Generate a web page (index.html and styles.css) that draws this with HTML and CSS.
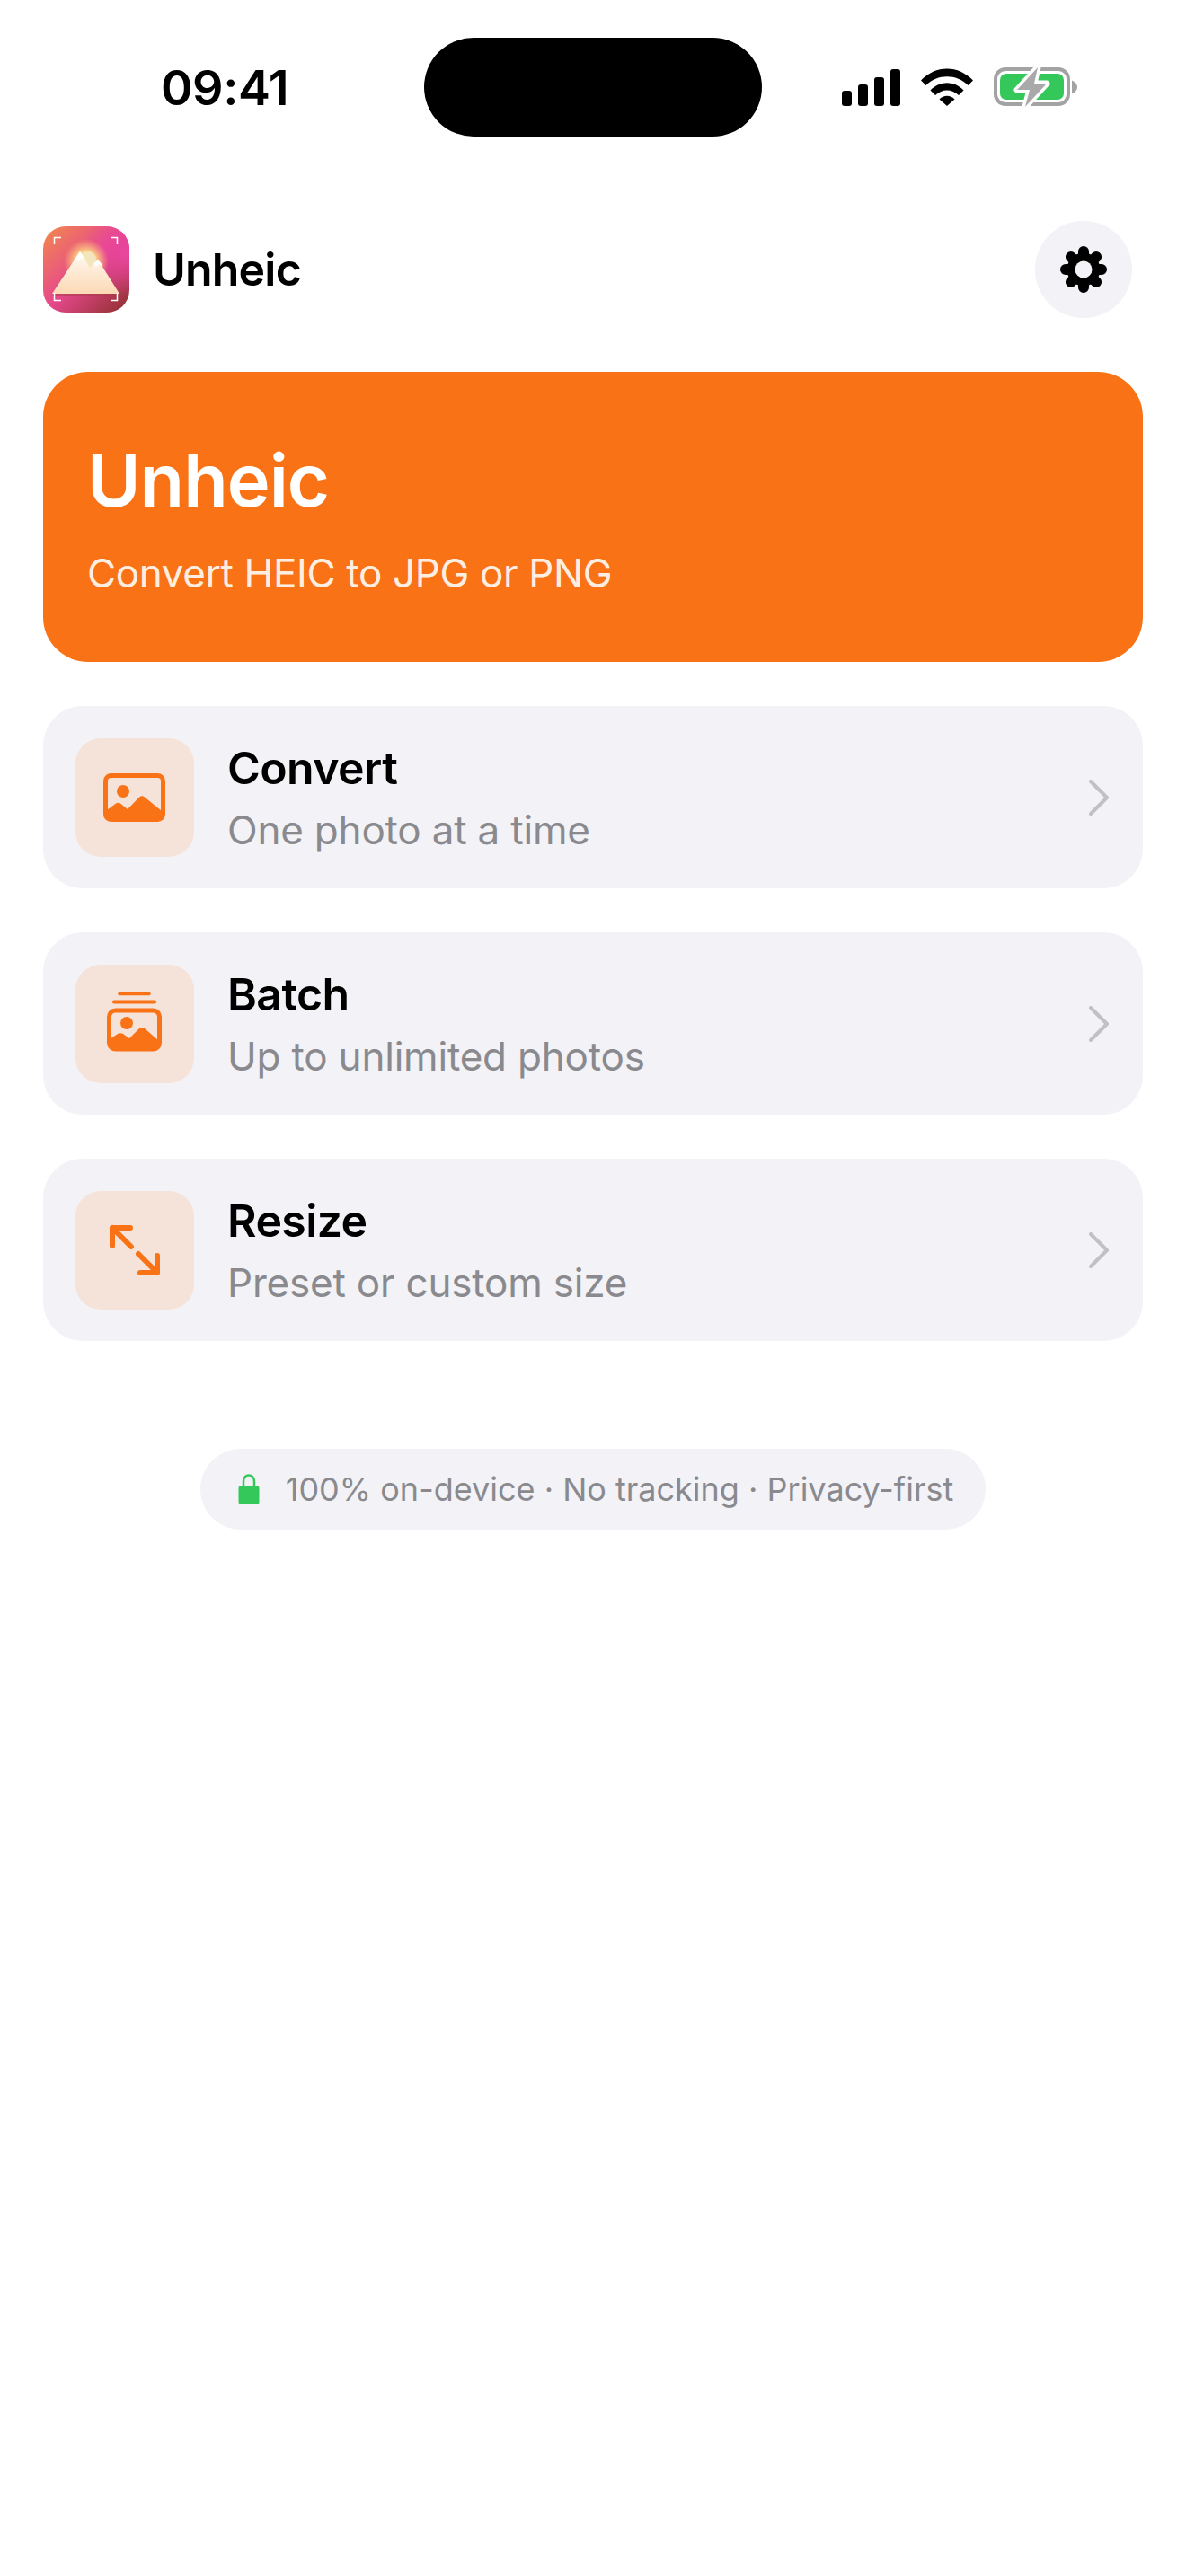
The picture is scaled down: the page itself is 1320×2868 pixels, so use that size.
FILE: index.html
```html
<!DOCTYPE html>
<html>
<head>
  <meta charset="UTF-8">
  <title>Unheic</title>
  <link rel="stylesheet" href="styles.css">
</head>
<body>
  <div class="status-bar">
    <div class="status-time">09:41</div>
    <div class="island"></div>
    <div class="status-icons">
      <svg class="signal" width="65" height="41" viewBox="0 0 65 41">
        <rect x="0" y="24" width="11" height="17" rx="3"/>
        <rect x="18" y="17" width="11" height="24" rx="3"/>
        <rect x="36" y="9" width="11" height="32" rx="3"/>
        <rect x="54" y="0" width="11" height="41" rx="3"/>
      </svg>
      <svg class="wifi" width="58" height="42" viewBox="0 0 58 42">
        <path d="M0 13.5C16-4 42-4 58 13.500L52.500 19C39.500 6 18.500 6 5.500 19Z"/>
        <path d="M10.500 24.500C21 13.500 37 13.500 47.500 24.500L42 30C34.500 22.500 23.500 22.500 16 30Z"/>
        <path d="M20.500 34.500C25.500 29.500 32.500 29.500 37.500 34.500L29 42Z"/>
      </svg>
      <svg class="battery" width="94" height="46" viewBox="0 0 94 46">
        <rect x="2" y="3" width="81" height="39" rx="11" fill="#fff" stroke="#a3a3a3" stroke-width="4"/>
        <rect x="7" y="8" width="71" height="29" rx="7" fill="#34c759"/>
        <path d="M87 15.500C91 17 93 20 93 23C93 26 91 29 87 30.500Z" fill="#a3a3a3"/>
        <path d="M49 1L26 26H40L35 45L59 19H45Z" fill="#a9a9a9" stroke="#fff" stroke-width="7" stroke-linejoin="round" paint-order="stroke"/>
      </svg>
    </div>
  </div>

  <div class="app-header">
    <div class="brand">
      <svg class="brand-logo" width="96" height="96" viewBox="0 0 96 96">
        <defs>
          <linearGradient id="logoBase" x1="0" y1="0" x2="1" y2="1">
            <stop offset="0" stop-color="#f28a4c"/>
            <stop offset="0.5" stop-color="#e6488c"/>
            <stop offset="1" stop-color="#8c2f2c"/>
          </linearGradient>
          <radialGradient id="logoPink" cx="0.95" cy="0.3" r="0.5">
            <stop offset="0" stop-color="#ea459f"/>
            <stop offset="1" stop-color="#ea459f" stop-opacity="0"/>
          </radialGradient>
          <radialGradient id="logoSun">
            <stop offset="0.4" stop-color="#ffdf8a"/>
            <stop offset="1" stop-color="#ffc070" stop-opacity="0"/>
          </radialGradient>
          <linearGradient id="logoPeak" x1="0" y1="0" x2="0" y2="1">
            <stop offset="0" stop-color="#fffaf2"/>
            <stop offset="1" stop-color="#fdd9b5"/>
          </linearGradient>
        </defs>
        <rect width="96" height="96" rx="25" fill="url(#logoBase)"/>
        <rect width="96" height="96" rx="25" fill="url(#logoPink)"/>
        <circle cx="48" cy="39" r="25" fill="url(#logoSun)"/>
        <circle cx="50" cy="37" r="9" fill="#f3e6bd"/>
        <path d="M10 75L41 28L52 46L61 37L85 75Z" fill="url(#logoPeak)"/>
        <path d="M35 37L41 28L47 37L42 35L39 39Z M56 42L61 37L67 44L62 42L59 45Z" fill="#fff"/>
        <path d="M10 75H85L83 78H12Z" fill="#a33b45" opacity="0.5"/>
        <path d="M12.500 20V12.500H20 M75 12.500H82.500V20 M12.500 74V82.500H20 M75 82.500H82.500V74" fill="none" stroke="#fff" stroke-width="1.500"/>
      </svg>
      <span class="brand-name">Unheic</span>
    </div>
    <button class="settings-btn">
      <svg width="54" height="54" viewBox="0 0 54 54">
        <g stroke="#000" stroke-width="12" stroke-linecap="round">
          <path d="M27 7V47M7 27H47M12.900 12.900L41.100 41.100M41.100 12.900L12.900 41.100"/>
        </g>
        <circle cx="27" cy="27" r="18.500"/>
        <circle cx="27" cy="27" r="9.500" fill="#f2f2f7"/>
      </svg>
    </button>
  </div>

  <div class="hero">
    <h1>Unheic</h1>
    <p>Convert HEIC to JPG or PNG</p>
  </div>

  <div class="tool-list">
    <div class="tool-row">
      <div class="tool-icon">
        <svg width="132" height="132" viewBox="0 0 132 132">
          <rect x="33.500" y="41.500" width="64" height="49" rx="6" fill="none" stroke="#f97316" stroke-width="5"/>
          <circle cx="53" cy="59" r="7" fill="#f97316"/>
          <path d="M35 80L45 72.500Q47.500 71 50 72.500L58 79L71 65.500Q74 63 77 65.500L96 81V87Q96 92 91 92H40Q35 92 35 87Z" fill="#f97316"/>
        </svg>
      </div>
      <div class="tool-text">
        <div class="tool-title">Convert</div>
        <div class="tool-sub">One photo at a time</div>
      </div>
      <svg class="chevron" width="24" height="40" viewBox="0 0 24 40"><path d="M2 2L20 20L2 38"/></svg>
    </div>

    <div class="tool-row">
      <div class="tool-icon">
        <svg width="132" height="132" viewBox="0 0 132 132">
          <path d="M49 32.500H82" stroke="#f97316" stroke-width="3.500" stroke-linecap="round"/>
          <path d="M43 41.500H88" stroke="#f97316" stroke-width="4" stroke-linecap="round"/>
          <rect x="37.500" y="51" width="56" height="43" rx="7" fill="none" stroke="#f97316" stroke-width="5"/>
          <circle cx="57" cy="65" r="7" fill="#f97316"/>
          <path d="M38 83L47 77Q50 75.500 53 77L60 82L71 71Q74 69 77 71L93 85V89Q93 95 87 95H44Q38 95 38 89Z" fill="#f97316"/>
        </svg>
      </div>
      <div class="tool-text">
        <div class="tool-title">Batch</div>
        <div class="tool-sub">Up to unlimited photos</div>
      </div>
      <svg class="chevron" width="24" height="40" viewBox="0 0 24 40"><path d="M2 2L20 20L2 38"/></svg>
    </div>

    <div class="tool-row">
      <div class="tool-icon">
        <svg width="132" height="132" viewBox="0 0 132 132">
          <path d="M62 62L41 41M41 61V41H61M70 70L91 91M91 72V91H72" fill="none" stroke="#f97316" stroke-width="6" stroke-linecap="round" stroke-linejoin="round"/>
        </svg>
      </div>
      <div class="tool-text">
        <div class="tool-title">Resize</div>
        <div class="tool-sub">Preset or custom size</div>
      </div>
      <svg class="chevron" width="24" height="40" viewBox="0 0 24 40"><path d="M2 2L20 20L2 38"/></svg>
    </div>
  </div>

  <div class="privacy-wrap">
    <div class="privacy-pill">
      <svg width="24" height="36" viewBox="0 0 24 36">
        <path d="M6 16V9.500C6 0 18 0 18 9.500V16" fill="none" stroke="#34c759" stroke-width="2.500"/>
        <rect x="0.500" y="14" width="23" height="21" rx="3" fill="#34c759"/>
      </svg>
      <span>100% on-device · No tracking · Privacy-first</span>
    </div>
  </div>
</body>
</html>
```

FILE: styles.css
```css
:root {
  --orange: #f97316;
  --row-bg: #f2f2f7;
  --icon-bg: #f5e3da;
  --grey-text: #8a8a8e;
}

* {
  box-sizing: border-box;
}

body {
  margin: 0;
  width: 1320px;
  height: 2868px;
  background-color: #fff;
  color: #000;
  font-family: Inter, "Liberation Sans", sans-serif;
  overflow: hidden;
}

/* 状态栏 */
.status-bar {
  display: grid;
  grid-template-columns: 472px 376px 1fr;
  align-items: center;
  height: 110px;
  margin-top: 42px;
}

.status-time {
  padding-left: 179px;
  font-size: 54px;
  font-weight: 600;
  letter-spacing: -0.5px;
}

.island {
  height: 110px;
  border-radius: 55px;
  background-color: #000;
}

.status-icons {
  display: flex;
  align-items: center;
  gap: 23px;
  padding-left: 89px;
}

/* 顶部 */
.app-header {
  display: flex;
  align-items: center;
  justify-content: space-between;
  height: 108px;
  margin-top: 94px;
  padding: 0 60px 0 48px;
}

.brand {
  display: flex;
  align-items: center;
  gap: 26px;
}

.brand-name {
  font-size: 50px;
  font-weight: 600;
  letter-spacing: -0.8px;
}

.settings-btn {
  display: flex;
  align-items: center;
  justify-content: center;
  width: 108px;
  height: 108px;
  padding: 0;
  border: none;
  border-radius: 50%;
  background-color: var(--row-bg);
}

.hero {
  height: 323px;
  margin: 60px 48px 0;
  padding: 71px 49px 0;
  border-radius: 50px;
  background-color: var(--orange);
  color: #fff;
}

.hero h1 {
  margin: 0;
  font-size: 81px;
  line-height: 100px;
  font-weight: 600;
  letter-spacing: -1px;
}

.hero p {
  margin: 26px 0 0;
  font-size: 44px;
  line-height: 54px;
  letter-spacing: -0.35px;
  color: rgba(255, 255, 255, 0.9);
}

/* 功能列表 */
.tool-list {
  display: flex;
  flex-direction: column;
  gap: 49px;
  margin: 49px 48px 0;
}

.tool-row {
  display: flex;
  align-items: center;
  height: 203px;
  padding: 0 36px;
  border-radius: 44px;
  background-color: var(--row-bg);
}

.tool-icon {
  flex: none;
  width: 132px;
  height: 132px;
  border-radius: 28px;
  background-color: var(--icon-bg);
}

.tool-icon svg {
  display: block;
}

.tool-text {
  flex: 1;
  margin-left: 37px;
}

.tool-title {
  font-size: 50px;
  line-height: 62px;
  font-weight: 600;
  letter-spacing: -0.6px;
}

.tool-sub {
  margin-top: 11px;
  font-size: 44px;
  line-height: 54px;
  letter-spacing: -0.2px;
  color: var(--grey-text);
}

.chevron path {
  fill: none;
  stroke: #c0c0c5;
  stroke-width: 4;
  stroke-linecap: round;
  stroke-linejoin: round;
}

.privacy-wrap {
  display: flex;
  justify-content: center;
  margin-top: 120px;
}

.privacy-pill {
  display: flex;
  align-items: center;
  gap: 29px;
  height: 90px;
  padding: 0 36px 0 42px;
  border-radius: 45px;
  background-color: var(--row-bg);
  color: var(--grey-text);
  font-size: 36px;
}
```
